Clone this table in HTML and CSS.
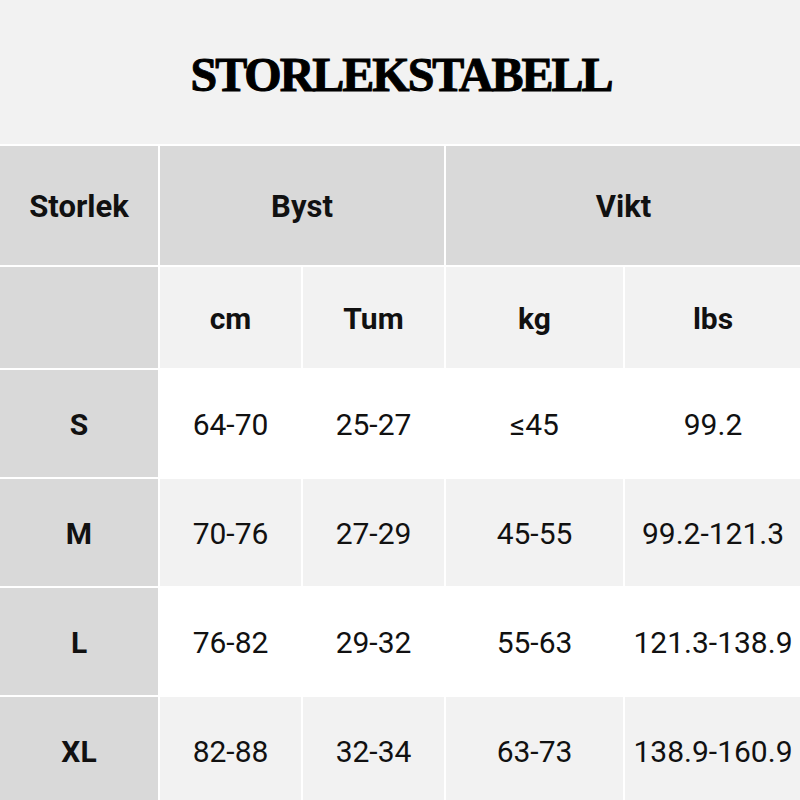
FILE: index.html
```html
<!DOCTYPE html>
<html lang="sv">
<head>
<meta charset="utf-8">
<title>Storlekstabell</title>
<link rel="stylesheet" href="styles.css">
</head>
<body>
<header class="title-bar"><h1 class="title">STORLEKSTABELL</h1></header>
<div class="table">
  <div class="cell head size-head">Storlek</div>
  <div class="cell head span2">Byst</div>
  <div class="cell head span2">Vikt</div>

  <div class="cell head size-col"></div>
  <div class="cell sub">cm</div>
  <div class="cell sub">Tum</div>
  <div class="cell sub">kg</div>
  <div class="cell sub">lbs</div>

  <div class="cell size-col label">S</div>
  <div class="cell odd">64-70</div>
  <div class="cell odd">25-27</div>
  <div class="cell odd">≤45</div>
  <div class="cell odd">99.2</div>

  <div class="cell size-col label">M</div>
  <div class="cell even">70-76</div>
  <div class="cell even">27-29</div>
  <div class="cell even">45-55</div>
  <div class="cell even">99.2-121.3</div>

  <div class="cell size-col label">L</div>
  <div class="cell odd">76-82</div>
  <div class="cell odd">29-32</div>
  <div class="cell odd">55-63</div>
  <div class="cell odd">121.3-138.9</div>

  <div class="cell size-col label">XL</div>
  <div class="cell even">82-88</div>
  <div class="cell even">32-34</div>
  <div class="cell even">63-73</div>
  <div class="cell even">138.9-160.9</div>
</div>
</body>
</html>
```

FILE: styles.css
```css
* { box-sizing: border-box; }
html, body {
  margin: 0;
  padding: 0;
  width: 800px;
  height: 800px;
  overflow: hidden;
  background: #f2f2f2;
}
body {
  font-family: Roboto, "Liberation Sans", sans-serif;
  color: #111;
}
.title-bar {
  height: 144px;
  display: flex;
  align-items: center;
  justify-content: center;
  background: #f2f2f2;
  padding-left: 2px;
  padding-top: 4px;
}
.title {
  margin: 0;
  font-family: "Liberation Serif", "DejaVu Serif", serif;
  font-weight: 700;
  font-size: 48px;
  letter-spacing: -2px;
  color: #000;
  -webkit-text-stroke: 1px #000;
}
.table {
  display: grid;
  grid-template-columns: 158px 141px 141px 177px 176px;
  grid-template-rows: 119px 101px 107px 107px 107px 107px;
  gap: 2px;
  padding-top: 2px;
  background: #ffffff;
  width: 801px;
}
.cell {
  display: flex;
  align-items: center;
  justify-content: center;
  font-size: 30px;
  color: #111;
  white-space: nowrap;
  padding-top: 2px;
}
.head {
  background: #d9d9d9;
  font-weight: 700;
  font-size: 31px;
}
.span2 { grid-column: span 2; }
.sub {
  background: #f2f2f2;
  font-weight: 700;
}
.size-col { background: #d9d9d9; }
.label { font-weight: 700; }
.odd { background: #ffffff; }
.even { background: #f2f2f2; }
```
